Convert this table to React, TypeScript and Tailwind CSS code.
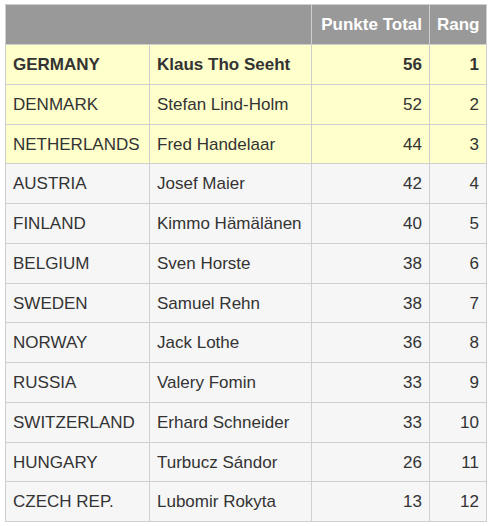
const rows: [string, string, number, number][] = [
  ['GERMANY', 'Klaus Tho Seeht', 56, 1],
  ['DENMARK', 'Stefan Lind-Holm', 52, 2],
  ['NETHERLANDS', 'Fred Handelaar', 44, 3],
  ['AUSTRIA', 'Josef Maier', 42, 4],
  ['FINLAND', 'Kimmo Hämälänen', 40, 5],
  ['BELGIUM', 'Sven Horste', 38, 6],
  ['SWEDEN', 'Samuel Rehn', 38, 7],
  ['NORWAY', 'Jack Lothe', 36, 8],
  ['RUSSIA', 'Valery Fomin', 33, 9],
  ['SWITZERLAND', 'Erhard Schneider', 33, 10],
  ['HUNGARY', 'Turbucz Sándor', 26, 11],
  ['CZECH REP.', 'Lubomir Rokyta', 13, 12],
];

export default function App() {
  return (
    <div className="w-[491px] h-[526px] bg-white pt-[4px] pl-[5px] font-['Liberation_Sans',Arial,sans-serif] text-[17px] text-[#333]">
      <table className="border-collapse border border-[#cfcfcf] table-fixed w-[481px]">
        <colgroup>
          <col className="w-[144px]" />
          <col className="w-[162px]" />
          <col className="w-[118px]" />
          <col className="w-[57px]" />
        </colgroup>
        <thead>
          <tr className="h-[40px] bg-[#999] text-white font-bold">
            <th colSpan={2} className="border border-[#cfcfcf]"></th>
            <th className="border border-[#cfcfcf] px-[7px] pt-[1px] text-right whitespace-nowrap">Punkte Total</th>
            <th className="border border-[#cfcfcf] px-[7px] pt-[1px] text-right">Rang</th>
          </tr>
        </thead>
        <tbody>
          {rows.map(([country, name, pts, rank], i) => (
            <tr
              key={country}
              className={`h-[39.75px] ${i < 3 ? 'bg-[#ffffcc]' : 'bg-[#f6f6f6]'} ${i === 0 ? 'font-bold' : ''}`}
            >
              <td className="border border-[#cfcfcf] px-[7px] pt-[1px] whitespace-nowrap">{country}</td>
              <td className="border border-[#cfcfcf] px-[7px] pt-[1px] whitespace-nowrap">{name}</td>
              <td className="border border-[#cfcfcf] px-[7px] pt-[1px] text-right">{pts}</td>
              <td className="border border-[#cfcfcf] px-[7px] pt-[1px] text-right">{rank}</td>
            </tr>
          ))}
        </tbody>
      </table>
    </div>
  );
}
